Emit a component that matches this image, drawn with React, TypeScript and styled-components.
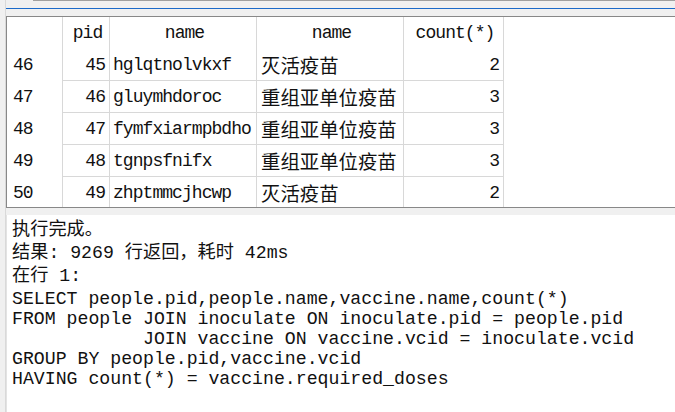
import React from "react";
import styled, { createGlobalStyle } from "styled-components";

const GlobalStyle = createGlobalStyle`
  html, body {
    margin: 0;
    padding: 0;
    background: #f0f0f0;
  }
  body {
    font-family: "Liberation Mono", "Noto Sans CJK SC", monospace;
    color: #000;
  }
`;

const Page = styled.div`
  box-sizing: border-box;
  min-height: 412px;
  padding-left: 5px;
  overflow: hidden;
`;

const Column = styled.div`
  display: flex;
  flex-direction: column;
  min-height: 412px;
  border-left: 1px solid #d9d9d9;
`;

const TopEdge = styled.div`
  height: 1px;
  margin-left: 27px;
  background: #a0a0a0;
`;

const TabLine = styled.div`
  height: 1px;
  margin-top: 7px;
  background: #1b6ac9;
`;

const Grid = styled.div`
  display: grid;
  grid-template-columns: 56px 47px 147px 147px 100px 1fr;
  grid-auto-rows: 32px;
  height: 190px;
  margin-top: 7px;
  overflow: hidden;
  background: #fff;
  border-top: 1px solid #888;
  border-bottom: 1px solid #888;
  border-left: 1px solid #888;
`;

type CellKind = "corner" | "rowhead" | "head" | "data" | "filler";

const Cell = styled.div<{ $kind: CellKind; $align?: "left" | "right" | "center"; $cjk?: boolean }>`
  box-sizing: border-box;
  display: flex;
  align-items: center;
  justify-content: ${(p) =>
    p.$align === "right" ? "flex-end" : p.$align === "center" ? "center" : "flex-start"};
  padding: ${(p) =>
    p.$kind === "rowhead"
      ? "0 0 0 6px"
      : p.$align === "right"
      ? "0 4px 0 0"
      : p.$cjk
      ? "0 0 0 4px"
      : "0 0 0 3px"};
  white-space: pre;
  overflow: hidden;
  color: #111;
  font-family: ${(p) => (p.$cjk ? `"Noto Sans CJK SC", sans-serif` : `"Liberation Mono", monospace`)};
  font-size: ${(p) => (p.$cjk ? "19.4px" : "18px")};
  letter-spacing: ${(p) => (p.$cjk ? "0" : "-0.95px")};
  border-right: ${(p) => (p.$kind === "filler" ? "none" : "1px solid #d8d8d8")};
  border-bottom: ${(p) => (p.$kind === "data" ? "1px solid #d8d8d8" : "none")};
`;

const Output = styled.div`
  flex: 1;
  margin-top: 7px;
  padding: 4px 0 0 5px;
  background: #fff;
  border-left: 1px solid #e3e3e3;
`;

const Line = styled.div<{ $sql?: boolean }>`
  font-family: "Liberation Mono", "Noto Sans CJK SC", monospace;
  font-size: 18.2px;
  line-height: ${(p) => (p.$sql ? "20px" : "23px")};
  color: #111;
  white-space: pre;
`;

const SqlBlock = styled.div`
  margin-top: 1px;
`;

const headers = ["pid", "name", "name", "count(*)"];

const rows: Array<[number, number, string, string, number]> = [
  [46, 45, "hglqtnolvkxf", "灭活疫苗", 2],
  [47, 46, "gluymhdoroc", "重组亚单位疫苗", 3],
  [48, 47, "fymfxiarmpbdho", "重组亚单位疫苗", 3],
  [49, 48, "tgnpsfnifx", "重组亚单位疫苗", 3],
  [50, 49, "zhptmmcjhcwp", "灭活疫苗", 2],
];

const sql = [
  "SELECT people.pid,people.name,vaccine.name,count(*)",
  "FROM people JOIN inoculate ON inoculate.pid = people.pid",
  "            JOIN vaccine ON vaccine.vcid = inoculate.vcid",
  "GROUP BY people.pid,vaccine.vcid",
  "HAVING count(*) = vaccine.required_doses",
];

export default function App() {
  return (
    <>
      <GlobalStyle />
      <Page>
        <Column>
          <TopEdge />
          <TabLine />
          <Grid>
            <Cell $kind="corner" />
            {headers.map((h, i) => (
              <Cell key={i} $kind="head" $align="center">
                {h}
              </Cell>
            ))}
            <Cell $kind="filler" />
            {rows.map(([n, pid, name, vname, count]) => (
              <React.Fragment key={n}>
                <Cell $kind="rowhead">{n}</Cell>
                <Cell $kind="data" $align="right">{pid}</Cell>
                <Cell $kind="data">{name}</Cell>
                <Cell $kind="data" $cjk>{vname}</Cell>
                <Cell $kind="data" $align="right">{count}</Cell>
                <Cell $kind="filler" />
              </React.Fragment>
            ))}
          </Grid>
          <Output>
            <Line>执行完成。</Line>
            <Line>结果: 9269 行返回，耗时 42ms</Line>
            <Line>在行 1:</Line>
            <SqlBlock>
              {sql.map((s, i) => (
                <Line key={i} $sql>
                  {s}
                </Line>
              ))}
            </SqlBlock>
          </Output>
        </Column>
      </Page>
    </>
  );
}
